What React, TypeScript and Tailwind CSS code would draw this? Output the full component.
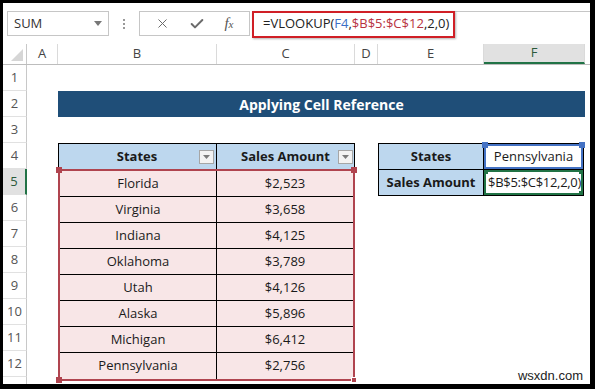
import { X, Check } from "lucide-react";

/* ── Sheet data ─────────────────────────────────────────────── */

const rows = [
  { state: "Florida", amount: "$2,523" },
  { state: "Virginia", amount: "$3,658" },
  { state: "Indiana", amount: "$4,125" },
  { state: "Oklahoma", amount: "$3,789" },
  { state: "Utah", amount: "$4,126" },
  { state: "Alaska", amount: "$5,896" },
  { state: "Michigan", amount: "$6,412" },
  { state: "Pennsylvania", amount: "$2,756" },
];

const cols = ["A", "B", "C", "D", "E", "F"];
const colW = ["w-[31px]", "w-[159px]", "w-[138px]", "w-[23px]", "w-[106px]", "w-[101px]"];

const cell = "font-['Open_Sans',sans-serif] text-[13px] text-[#1a1a1a]";

/* ── Small pieces ───────────────────────────────────────────── */

function FilterButton() {
  return (
    <span className="w-[15px] h-[14px] border border-[#a6a6a6] bg-[#f3f3f3] flex items-center justify-center">
      <svg width="7" height="4" viewBox="0 0 7 4">
        <path d="M0 0h7L3.5 4z" fill="#7a7a7a" />
      </svg>
    </span>
  );
}

function Handle({ pos, color }: { pos: string; color: string }) {
  return <span className={`absolute w-[6px] h-[6px] ${pos} ${color}`} />;
}

function RowHead({ n, active }: { n?: number; active?: boolean }) {
  return (
    <div
      className={`h-[26px] shrink-0 flex items-end justify-center pb-[3px] border-b border-[#e1e1e1] text-[13px] font-['Open_Sans',sans-serif] ${
        active
          ? "bg-[#e1e1e1] text-[#2b5a3b] border-r-2 border-r-[#217346]"
          : "bg-white text-[#555] border-r border-r-[#c8c8c8]"
      }`}
    >
      {n}
    </div>
  );
}

/* ── Page ───────────────────────────────────────────────────── */

export default function App() {
  return (
    <div className="relative w-[595px] h-[389px] bg-black pt-[3px] pl-[3px] pr-[5px] pb-[5px]">
      <div className="w-full h-full bg-white flex flex-col overflow-hidden">
        {/* formula bar */}
        <div className="h-[41px] shrink-0 flex items-center pl-[4px]">
          <div className="w-[102px] h-[25px] border border-[#c6c6c6] flex items-center justify-between px-[6px]">
            <span className="font-['Open_Sans',sans-serif] text-[13px] text-[#333]">SUM</span>
            <svg width="8" height="5" viewBox="0 0 8 5">
              <path d="M0 0h8L4 5z" fill="#777" />
            </svg>
          </div>
          <div className="w-[30px] flex flex-col items-center gap-[2px]">
            <span className="w-[2px] h-[2px] bg-[#999]" />
            <span className="w-[2px] h-[2px] bg-[#999]" />
            <span className="w-[2px] h-[2px] bg-[#999]" />
          </div>
          <div className="w-[111px] h-[25px] border border-[#c6c6c6] flex items-center justify-around px-[6px]">
            <X size={15} strokeWidth={1.6} className="text-[#6b6b6b]" />
            <Check size={16} strokeWidth={3} className="text-[#6b6b6b]" />
            <span className="font-['Liberation_Serif',serif] italic text-[15px] text-[#555]">
              f<span className="text-[11px]">x</span>
            </span>
          </div>
          <div className="flex-1 h-[26px] border-t border-[#c6c6c6] flex items-stretch ml-[2px]">
            <div className="w-[203px] -mt-[1px] h-[27px] border-2 border-[#d01f26] flex items-center pl-[9px] font-['Open_Sans',sans-serif] text-[13px] text-[#222] shadow-[1px_1px_2px_rgba(0,0,0,0.3)]">
              =VLOOKUP(<span className="text-[#3b6fc6]">F4</span>,
              <span className="text-[#b83240]">$B$5:$C$12</span>,2,0)
            </div>
          </div>
        </div>

        {/* column headers */}
        <div className="h-[21px] shrink-0 flex border-b border-[#bdbdbd]">
          <div className="w-[24px] border-r border-[#c8c8c8] flex items-end justify-end p-[3px]">
            <svg width="12" height="12" viewBox="0 0 12 12">
              <path d="M12 0v12H0z" fill="#d6d6d6" />
            </svg>
          </div>
          {cols.map((c, i) => (
            <div
              key={c}
              className={`${colW[i]} flex items-center justify-center border-r border-[#dadada] font-['Open_Sans',sans-serif] text-[13px] ${
                c === "F" ? "bg-[#e1e1e1] border-b-2 border-b-[#217346] text-[#2b5a3b]" : "text-[#444]"
              }`}
            >
              {c}
            </div>
          ))}
          <div className="flex-1" />
        </div>

        {/* grid body */}
        <div className="flex shrink-0">
          <div className="w-[24px] flex flex-col">
            {Array.from({ length: 12 }, (_, i) => (
              <RowHead key={i} n={i + 1} active={i === 4} />
            ))}
            <RowHead />
          </div>

          <div className="w-[31px]" />

          {/* B–F */}
          <div className="w-[527px] flex flex-col">
            <div className="h-[26px]" />
            <div className="h-[26px] bg-[#1f4e78] flex items-center justify-center font-['Open_Sans',sans-serif] font-bold text-[14px] text-white">
              Applying Cell Reference
            </div>
            <div className="h-[26px]" />

            <div className="flex">
              {/* data table B4:C12 */}
              <div className="w-[297px] flex flex-col">
                <div className="h-[26px] flex bg-[#bdd7ee] border border-black border-b-0">
                  <div className="w-[159px] -ml-[1px] border-r border-black flex items-center justify-center relative">
                    <span className={`${cell} font-bold`}>States</span>
                    <span className="absolute right-[2px] top-[6px]">
                      <FilterButton />
                    </span>
                  </div>
                  <div className="flex-1 flex items-center justify-center relative">
                    <span className={`${cell} font-bold`}>Sales Amount</span>
                    <span className="absolute right-[1px] top-[6px]">
                      <FilterButton />
                    </span>
                  </div>
                </div>
                <div className="relative border-2 border-[#b0444f] bg-[#f8e6e7]">
                  {rows.map((r, i) => (
                    <div
                      key={r.state}
                      className={`h-[26px] flex ${i < rows.length - 1 ? "border-b border-black" : ""}`}
                    >
                      <div className={`w-[157px] border-r border-black flex items-center justify-center ${cell}`}>
                        {r.state}
                      </div>
                      <div className={`flex-1 flex items-center justify-center ${cell}`}>{r.amount}</div>
                    </div>
                  ))}
                  <Handle pos="-left-[4px] -top-[4px]" color="bg-[#b0444f]" />
                  <Handle pos="-right-[4px] -top-[4px]" color="bg-[#b0444f]" />
                  <Handle pos="-left-[4px] -bottom-[4px]" color="bg-[#b0444f]" />
                  <Handle pos="-right-[4px] -bottom-[4px] border border-white" color="bg-[#b0444f]" />
                </div>
              </div>

              <div className="w-[23px]" />

              {/* lookup table E4:F5 */}
              <div className="w-[206px] h-[53px] flex flex-col border border-black">
                <div className="h-[26px] flex border-b border-black">
                  <div className={`w-[105px] bg-[#bdd7ee] border-r border-black flex items-center justify-center ${cell} font-bold`}>
                    States
                  </div>
                  <div className="flex-1 relative border-2 border-[#4472c4] flex items-center justify-center">
                    <span className={cell}>Pennsylvania</span>
                    <Handle pos="-left-[4px] -top-[4px]" color="bg-[#4472c4]" />
                    <Handle pos="-right-[4px] -top-[4px]" color="bg-[#4472c4]" />
                  </div>
                </div>
                <div className="h-[26px] flex">
                  <div className={`w-[105px] bg-[#bdd7ee] border-r border-black flex items-center justify-center ${cell} font-bold`}>
                    Sales Amount
                  </div>
                  <div className="flex-1 relative border-2 border-[#217346] flex items-center justify-end overflow-hidden">
                    <span className={`${cell} text-[12px] tracking-[-0.3px] whitespace-nowrap`}>$B$5:$C$12,2,0)</span>
                    <Handle pos="-left-[4px] -top-[4px]" color="bg-[#217346]" />
                    <Handle pos="-right-[4px] -top-[4px]" color="bg-[#217346]" />
                    <Handle pos="-right-[4px] -bottom-[4px]" color="bg-[#217346]" />
                  </div>
                </div>
              </div>
            </div>
          </div>
        </div>
      </div>
      <span className="absolute right-[12px] bottom-[4px] font-['Liberation_Sans',sans-serif] text-[13px] text-[#222]">
        wsxdn.com
      </span>
    </div>
  );
}
